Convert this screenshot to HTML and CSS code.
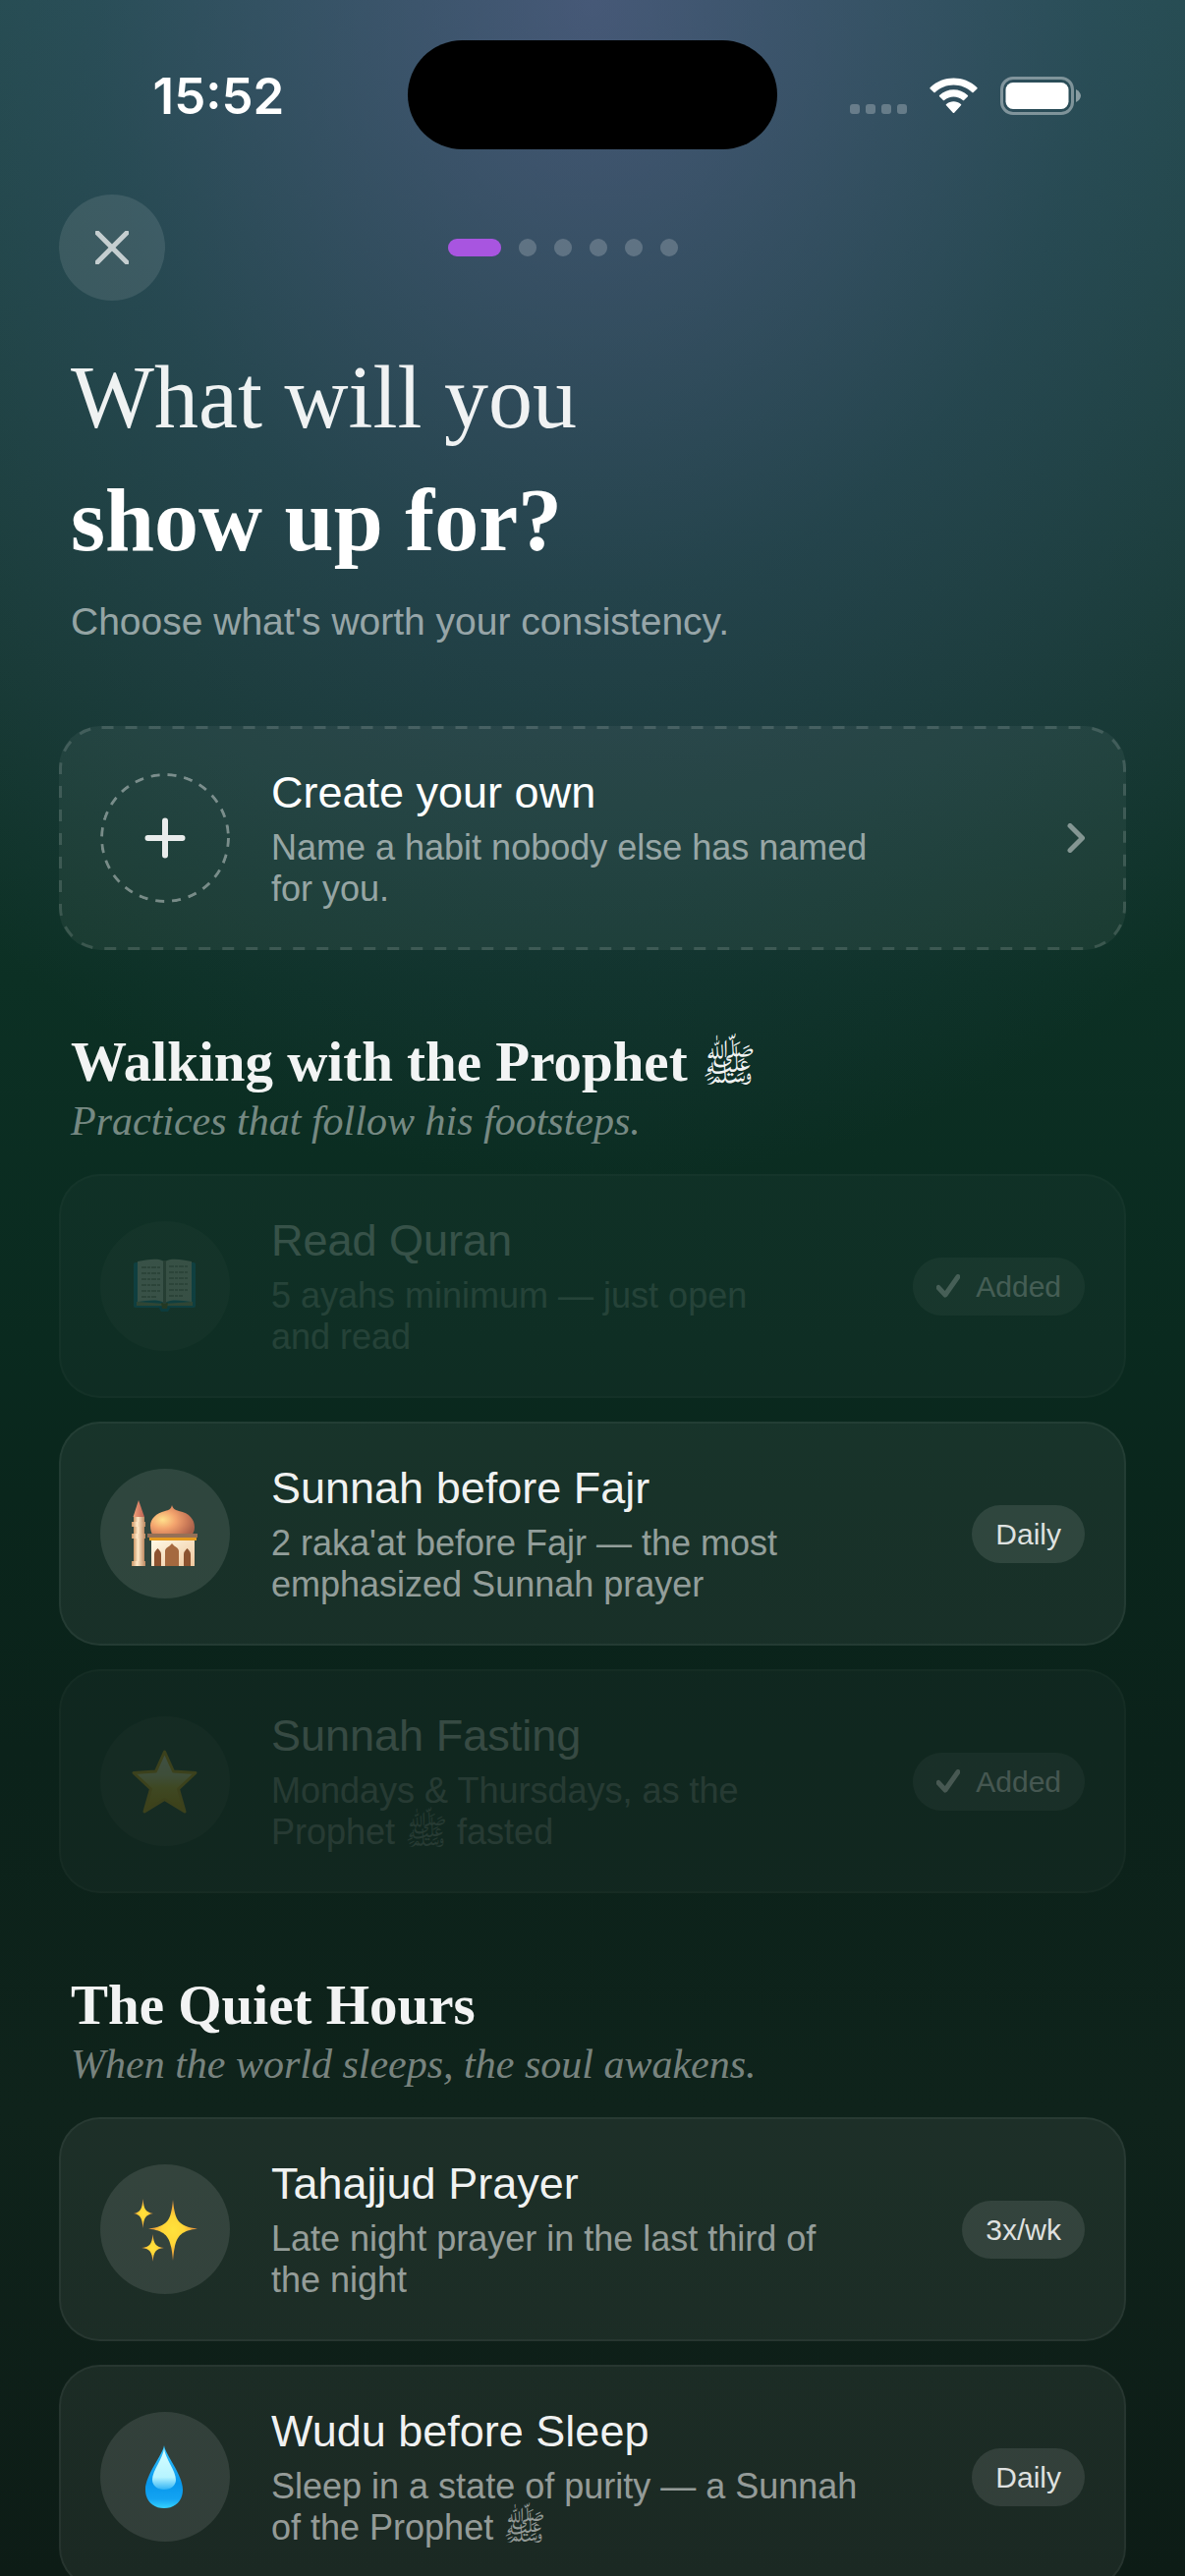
FILE: index.html
```html
<!DOCTYPE html>
<html lang="en">
<head>
<meta charset="utf-8">
<meta name="viewport" content="width=device-width, initial-scale=1">
<title>What will you show up for?</title>
<link rel="stylesheet" href="styles.css">
</head>
<body>
<div class="app">
  <div class="status">
    <time class="clock">15:52</time>
    <div class="island"></div>
    <div class="indicators">
      <svg class="signal" width="58" height="10" viewBox="0 0 58 10"><rect width="10" height="10" rx="3"/><rect x="16" width="10" height="10" rx="3"/><rect x="32" width="10" height="10" rx="3"/><rect x="48" width="10" height="10" rx="3"/></svg>
      <svg class="wifi" width="51" height="37" viewBox="0 0 51 37"><path d="M25.500 7.800C31.800 7.800 37.800 10.300 42.300 14.600C42.600 14.900 43.200 14.900 43.500 14.600L46.800 11.300C47.200 10.900 47.200 10.300 46.800 9.900C34.900 -1.500 16.100 -1.500 4.200 9.900C3.800 10.300 3.800 10.900 4.200 11.300L7.500 14.600C7.800 14.900 8.400 14.900 8.700 14.600C13.200 10.300 19.200 7.800 25.500 7.800Z" transform="translate(-3 -1) scale(1.118 1.1)"/><path d="M25.500 19.500C29 19.500 32.300 20.800 34.900 23.100C35.300 23.400 35.800 23.400 36.100 23.100L39.900 19.300C40.300 18.900 40.300 18.300 39.900 17.900C31.800 10.400 19.200 10.400 11.100 17.900C10.700 18.300 10.700 18.900 11.100 19.300L14.900 23.100C15.200 23.400 15.700 23.400 16.100 23.100C18.700 20.800 22 19.500 25.500 19.500Z"/><path d="M33 27.300C33.400 26.900 33.400 26.300 32.900 25.900C28.600 22.400 22.400 22.400 18.100 25.900C17.600 26.300 17.600 26.900 18 27.300L24.800 34.800C25.200 35.200 25.800 35.200 26.200 34.800Z" transform="translate(0 1)"/></svg>
      <svg class="battery" width="82" height="39" viewBox="0 0 82 39"><rect x="1.500" y="1.500" width="72" height="36" rx="11.500" fill="none" stroke="#fff" stroke-opacity=".4" stroke-width="3"/><rect x="5.500" y="6" width="64" height="27" rx="7.500"/><path d="M77 13C80 14.500 82 17 82 19.500S80 24.500 77 26Z" opacity=".45"/></svg>
    </div>
  </div>

  <header class="nav">
    <button class="close" type="button" aria-label="Close"><svg width="34" height="34" viewBox="0 0 34 34"><path d="M2 2L32 32M32 2L2 32"/></svg></button>
    <div class="steps"><i class="current"></i><i></i><i></i><i></i><i></i><i></i></div>
    <div class="nav-end"></div>
  </header>

  <main>
    <h1>What will you<br><strong>show up for?</strong></h1>
    <p class="lead">Choose what's worth your consistency.</p>

    <button class="card create" type="button">
      <svg class="outline"><rect x="1.500" y="1.500" rx="42"/></svg>
      <svg class="icon" viewBox="0 0 132 132"><circle class="ring" cx="66" cy="66" r="64.500"/><path class="plus" d="M66 48.500V83.500M48.500 66H83.500"/></svg>
      <span class="text"><span class="name">Create your own</span><span class="desc">Name a habit nobody else has named for you.</span></span>
      <svg class="chevron" width="18" height="30" viewBox="0 0 18 30"><path d="M3 2.500L15.500 15L3 27.500"/></svg>
    </button>

    <section>
      <h2>Walking with the Prophet <span class="honorific">ﷺ</span></h2>
      <p class="tagline">Practices that follow his footsteps.</p>
      <div class="list">
        <button class="card added" type="button" disabled>
          <svg class="icon filled" viewBox="0 0 132 132">
            <rect x="34" y="42" width="63" height="46" rx="2" fill="#1787b5"/><path d="M59 87H72L69 92H62Z" fill="#0b75a8"/><path d="M37 82L65.500 84L94 82V86H37Z" fill="#b8a87e"/><path d="M62 83H69L68 89H63Z" fill="#7d6928"/>
            <path d="M38 41C48 39 59 37 65 41V83C58 79 48 81 38 82Z" fill="#e4dfd4"/><path d="M93 41C83 39 72 37 66 41V83C73 79 83 81 93 82Z" fill="#dedacc"/><path d="M65.500 40V84" stroke="#877f74" stroke-width="3"/>
            <path d="M42 47H61M42 53H61M42 59H61M42 65H61M42 71H61M42 77H58M70 46H89M70 52H89M70 58H89M70 64H89M70 70H89M70 76H84" stroke="#a39d92" stroke-width="2" stroke-dasharray="5 1 3 1"/>
          </svg>
          <span class="text"><span class="name">Read Quran</span><span class="desc">5 ayahs minimum — just open and read</span></span>
          <span class="badge"><svg width="24" height="24" viewBox="0 0 24 24"><path d="M2 13.500L9 21L22 2.500"/></svg>Added</span>
        </button>
        <button class="card" type="button">
          <svg class="icon filled" viewBox="0 0 132 132">
            <defs>
              <radialGradient id="dome" cx=".28" cy=".48" r=".75"><stop offset="0" stop-color="#ffe08c"/><stop offset=".4" stop-color="#f3a36d"/><stop offset=".75" stop-color="#cb7a58"/><stop offset="1" stop-color="#a8614a"/></radialGradient>
              <linearGradient id="tower"><stop offset="0" stop-color="#c99464"/><stop offset=".4" stop-color="#ffe9c8"/><stop offset="1" stop-color="#bc8860"/></linearGradient>
              <linearGradient id="wall" x1="0" y1="0" x2="1" y2="1"><stop offset="0" stop-color="#fffbe8"/><stop offset="1" stop-color="#efc79e"/></linearGradient>
              <linearGradient id="spire"><stop offset="0" stop-color="#f3a27a"/><stop offset="1" stop-color="#bd6253"/></linearGradient>
            </defs>
            <path d="M39 32L45 49H33.500Z" fill="url(#spire)"/><path d="M34 49H45V96H34Z" fill="url(#tower)"/><path d="M32 54H46V59H32ZM32 66H46V71H32ZM32 94H46V99H32Z" fill="url(#tower)"/>
            <path d="M73 37C74 41 77 42 80 43C91 45 96 52 96 59C96 64 94 67 92 68H54C52 66 51 62 51 58C51 51 57 45 66 43C70 42 72 41 73 37Z" fill="url(#dome)"/>
            <path d="M52 72H96V99H52Z" fill="url(#wall)"/><path d="M48 66H99V70H48Z" fill="#957057"/><path d="M50 70H98V73H50Z" fill="#e59b20"/>
            <path d="M66 99V84C66 80 70 80 73 76C76 80 80 80 80 84V99Z" fill="#a5693f"/><path d="M55 99V87C55 84 57 83 58.500 81C60 83 62 84 62 87V99ZM85 99V87C85 84 87 83 88.500 81C90 83 92 84 92 87V99Z" fill="#8c5330"/>
          </svg>
          <span class="text"><span class="name">Sunnah before Fajr</span><span class="desc">2 raka'at before Fajr — the most emphasized Sunnah prayer</span></span>
          <span class="badge">Daily</span>
        </button>
        <button class="card added" type="button" disabled>
          <svg class="icon filled" viewBox="0 0 132 132">
            <defs><linearGradient id="star" x1="0" y1="0" x2="0" y2="1"><stop offset="0" stop-color="#fff8e0"/><stop offset=".4" stop-color="#fff0a8"/><stop offset=".6" stop-color="#ffd43a"/><stop offset="1" stop-color="#f0a800"/></linearGradient></defs>
            <path class="star" d="M65.500 36L74.500 56L97 57.500L79.500 74L86 97L65.500 84.500L45 97L51.500 74L34 57.500L56.500 56Z" fill="url(#star)" stroke="#efb018" stroke-width="3" stroke-linejoin="round"/>
          </svg>
          <span class="text"><span class="name">Sunnah Fasting</span><span class="desc">Mondays &amp; Thursdays, as the Prophet ﷺ fasted</span></span>
          <span class="badge"><svg width="24" height="24" viewBox="0 0 24 24"><path d="M2 13.500L9 21L22 2.500"/></svg>Added</span>
        </button>
      </div>
    </section>

    <section>
      <h2>The Quiet Hours</h2>
      <p class="tagline">When the world sleeps, the soul awakens.</p>
      <div class="list">
        <button class="card" type="button">
          <svg class="icon filled" viewBox="0 0 132 132">
            <defs><radialGradient id="gleam"><stop offset="0" stop-color="#ffe23c"/><stop offset=".45" stop-color="#ffd637"/><stop offset="1" stop-color="#e88a3c"/></radialGradient></defs>
            <path fill="url(#gleam)" d="M74 36C76 57 79 63 99 65.500C79 68 76 75 74 98C72 75 69 68 49 65.500C69 63 72 57 74 36Z"/><path fill="url(#gleam)" d="M43.500 35C44.500 46 46 48.500 54 50C46 51.500 44.500 54 43.500 65C42.500 54 41 51.500 34 50C41 48.500 42.500 46 43.500 35Z"/><path fill="url(#gleam)" d="M53.500 71C54.500 82 57 84 65 85C57 86 54.500 88 53.500 99C52.500 88 50 86 42 85C50 84 52.500 82 53.500 71Z"/>
          </svg>
          <span class="text"><span class="name">Tahajjud Prayer</span><span class="desc">Late night prayer in the last third of the night</span></span>
          <span class="badge">3x/wk</span>
        </button>
        <button class="card" type="button">
          <svg class="icon filled" viewBox="0 0 132 132">
            <defs>
              <linearGradient id="drop" x1="0" y1="0" x2="0" y2="1"><stop offset="0" stop-color="#35c4ff"/><stop offset=".6" stop-color="#0797ec"/><stop offset=".85" stop-color="#13a3f2"/><stop offset="1" stop-color="#35d2ff"/></linearGradient>
              <linearGradient id="shine" x1="0" y1="0" x2="0" y2="1"><stop offset="0" stop-color="#d9ffff"/><stop offset=".7" stop-color="#b6f4ff"/><stop offset="1" stop-color="#30b3f5"/></linearGradient>
            </defs>
            <path d="M65 34C66 43 84 64 84 79C84 91 76 98 65 98S46 91 46 79C46 64 64 43 65 34Z" fill="url(#drop)"/><path d="M65 37C66 47 77 60 77 69C77 75 72 79 65 79S53 75 53 69C53 60 64 47 65 37Z" fill="url(#shine)"/>
          </svg>
          <span class="text"><span class="name">Wudu before Sleep</span><span class="desc">Sleep in a state of purity — a Sunnah of the Prophet ﷺ</span></span>
          <span class="badge">Daily</span>
        </button>
      </div>
    </section>
  </main>
</div>
</body>
</html>
```
FILE: styles.css
```css
* { box-sizing: border-box; }

body {
  margin: 0;
  color: #fff;
  font-family: "Liberation Sans", Arial, sans-serif;
}

.app {
  height: 100vh;
  overflow-y: auto;
  scrollbar-width: none;
  background:
    radial-gradient(ellipse 84% 46% at 50% 0, rgba(108, 104, 168, .52), rgba(78, 95, 150, .26) 50%, rgba(60, 90, 130, 0)),
    linear-gradient(#1d4842 0%, #14372e 26%, #0c3024 38%, #0a2a1f 52%, #0a261c 58%, #0b221a 68%, #0f231b 82%, #0d1c16 100%);
}

/* Status bar */
.status {
  display: grid;
  grid-template-columns: 1fr 376px 1fr;
  align-items: center;
  padding-top: 41px;
}
.clock {
  padding: 3px 0 0 30px;
  font: 600 51px/60px Inter, sans-serif;
  text-align: center;
}
.island { height: 111px; border-radius: 56px; background: #000; }
.indicators {
  display: flex;
  align-items: center;
  justify-content: flex-end;
  gap: 22px;
  padding: 2px 106px 0 0;
}
.indicators svg { fill: #fff; }
.indicators .signal { align-self: flex-end; margin-bottom: 1px; opacity: .25; }

/* Navigation row */
.nav {
  display: flex;
  align-items: center;
  justify-content: space-between;
  padding: 46px 60px 0;
}
.nav-end { width: 168px; }
.close {
  display: grid;
  place-items: center;
  width: 108px;
  height: 108px;
  padding: 0;
  border: 0;
  border-radius: 50%;
  background: rgba(255, 255, 255, .1);
}
.close path { stroke: rgba(255, 255, 255, .7); stroke-width: 5; stroke-linecap: round; }
.steps { display: flex; gap: 18px; }
.steps i { width: 18px; height: 18px; border-radius: 9px; background: rgba(255, 255, 255, .2); }
.steps .current { width: 54px; background: #a855e0; }

main { padding: 36px 60px 60px; }

h1, h2, .lead, .tagline { margin: 0; padding: 0 12px; }
h1 {
  color: rgba(255, 255, 255, .93);
  font: 400 90px/125px "Liberation Serif", "Times New Roman", serif;
}
h1 strong { color: #fff; }
.lead {
  margin-top: 17px;
  color: rgba(255, 255, 255, .55);
  font-size: 39px;
  line-height: 48px;
}

section { margin-top: 81px; }
h2 {
  color: rgba(255, 255, 255, .95);
  font: 700 57px/66px "Liberation Serif", "Times New Roman", serif;
}
.honorific { font-size: 46px; font-weight: 400; line-height: 1; }
.tagline {
  margin-top: 3px;
  color: rgba(255, 255, 255, .45);
  font: italic 42px/48px "Liberation Serif", "Times New Roman", serif;
}

/* Habit cards */
.list { display: grid; gap: 24px; margin-top: 30px; }
.card {
  position: relative;
  display: flex;
  align-items: center;
  width: 100%;
  padding: 39px 40px;
  border: 2px solid rgba(255, 255, 255, .05);
  border-radius: 42px;
  background: rgba(255, 255, 255, .06);
  color: #fff;
  font: inherit;
  text-align: left;
}
.card.added { opacity: .4; }
.icon { flex: none; width: 132px; height: 132px; margin-right: 42px; border-radius: 50%; }
.icon.filled { background: rgba(255, 255, 255, .1); }
.text { display: grid; gap: 8px; flex: 1; padding-right: 96px; }
.added .text { padding-right: 108px; opacity: .45; }
.added .icon { opacity: .5; }
.name { color: rgba(255, 255, 255, .95); font-size: 45px; line-height: 54px; }
.desc { max-width: 620px; color: rgba(255, 255, 255, .55); font-size: 36px; line-height: 42px; }
.badge {
  display: flex;
  align-items: center;
  gap: 16px;
  padding: 9px 24px;
  border-radius: 30px;
  background: rgba(255, 255, 255, .1);
  color: rgba(255, 255, 255, .85);
  font-size: 30px;
  line-height: 41px;
  white-space: nowrap;
}
.added .badge { color: rgba(255, 255, 255, .55); }
.badge path { fill: none; stroke: rgba(255, 255, 255, .55); stroke-width: 5; stroke-linecap: round; stroke-linejoin: round; }

.create { margin-top: 82px; border-color: transparent; background: rgba(255, 255, 255, .05); }
.create .name { color: #fff; }
.outline { position: absolute; inset: -2px; width: calc(100% + 4px); height: calc(100% + 4px); }
.outline rect {
  width: calc(100% - 3px);
  height: calc(100% - 3px);
  fill: none;
  stroke: rgba(255, 255, 255, .14);
  stroke-width: 3;
  stroke-dasharray: 12 12;
}
.ring { fill: none; stroke: rgba(255, 255, 255, .4); stroke-width: 3; stroke-dasharray: 9 8; }
.plus { stroke: rgba(255, 255, 255, .9); stroke-width: 6; stroke-linecap: round; }
.chevron path { fill: none; stroke: rgba(255, 255, 255, .45); stroke-width: 5; stroke-linecap: round; stroke-linejoin: round; }
```
